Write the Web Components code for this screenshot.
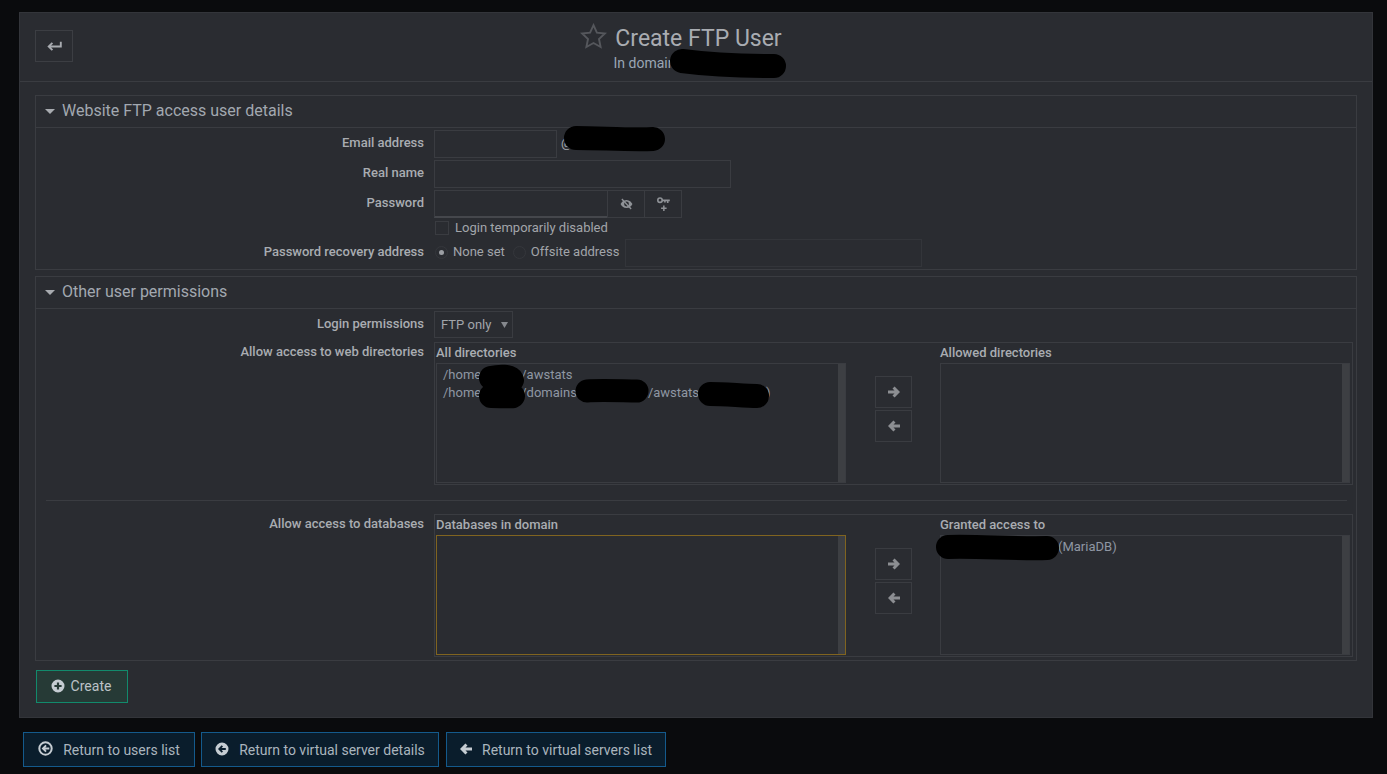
<!DOCTYPE html>
<html lang="en"><head><meta charset="utf-8"><title>Create FTP User</title>
<style>
html,body{margin:0;height:774px;overflow:hidden;background:#0a0b0d;font-family:Roboto,"Liberation Sans",sans-serif;color:#a6a9ae;font-size:13px}
body{position:relative}
.sp{display:inline-block}
</style></head><body>
<wm-page>
  <wm-panel>
    <wm-header slot="header" title-text="Create FTP User" sub="In domain"></wm-header>
    <wm-section heading="Website FTP access user details" style="margin-top:13px;height:175px">
      <wm-row label="Email address"><wm-input w="123"></wm-input><span style="margin:5px 0 0 4px;font-size:13px">@</span></wm-row>
      <wm-row label="Real name"><wm-input w="297"></wm-input></wm-row>
      <wm-row label="Password"><wm-pass></wm-pass></wm-row>
      <wm-row style="margin-top:1px;height:14px"><wm-check label="Login temporarily disabled"></wm-check></wm-row>
      <wm-row label="Password recovery address" style="margin-top:2px"><wm-radios></wm-radios></wm-row>
    </wm-section>
    <wm-section heading="Other user permissions" style="margin-top:6px;height:385px">
      <wm-row label="Login permissions"><wm-select>FTP only</wm-select></wm-row>
      <wm-row label="Allow access to web directories" style="margin-top:2px" top>
        <wm-multi left="All directories" right="Allowed directories">
          <div slot="l">/home<span class="sp" style="width:40px"></span>/awstats</div>
          <div slot="l">/home<span class="sp" style="width:40px"></span>/domains<span class="sp" style="width:71px"></span>/awstats<span class="sp" style="width:67px"></span>)</div>
        </wm-multi>
      </wm-row>
      <wm-rule></wm-rule>
      <wm-row label="Allow access to databases" top>
        <wm-multi left="Databases in domain" right="Granted access to" amber>
          <div slot="r"><span class="sp" style="width:111px"></span>(MariaDB)</div>
        </wm-multi>
      </wm-row>
    </wm-section>
    <wm-btn kind="create" icon="plus" style="margin:9px 0 0 16px" w="92">Create</wm-btn>
  </wm-panel>
  <wm-footer>
    <wm-btn kind="ret" icon="circle-o-left" w="172">Return to users list</wm-btn>
    <wm-btn kind="ret" icon="circle-left" w="238">Return to virtual server details</wm-btn>
    <wm-btn kind="ret" icon="left" w="220" style="margin-left:1px">Return to virtual servers list</wm-btn>
  </wm-footer>
</wm-page>
<wm-redactions></wm-redactions>
<script>
const ICONS={
 plus:'<svg width="14" height="14" viewBox="0 0 14 14"><path fill-rule="evenodd" fill="currentColor" d="M7 .5a6.500 6.500 0 1 0 0 13 6.500 6.500 0 0 0 0-13zM5.900 3.400h2.200v2.500h2.500v2.200H8.100v2.500H5.900V8.100H3.400V5.900h2.500z"/></svg>',
 'circle-o-left':'<svg width="15" height="15" viewBox="0 0 15 15"><circle cx="7.500" cy="7.500" r="6.200" fill="none" stroke="currentColor" stroke-width="2"/><path fill="currentColor" d="M3.600 7.500 7.400 3.800l1.300 1.300-1.400 1.300h4v2.200h-4l1.400 1.300-1.300 1.300z"/></svg>',
 'circle-left':'<svg width="14" height="14" viewBox="0 0 14 14"><path fill-rule="evenodd" fill="currentColor" d="M7 .5a6.500 6.500 0 1 0 0 13 6.500 6.500 0 0 0 0-13zM3 7l3.700-3.700L8 4.600 6.600 6h4.200v2H6.600L8 9.400l-1.300 1.300z"/></svg>',
 left:'<svg width="12" height="12" viewBox="0 0 12 12"><path fill="currentColor" d="M0 6 5.400.4 7.500 2.500l-2 1.900H12v3.200H5.500l2 1.900-2.100 2.100z"/></svg>',
 right:'<svg width="12" height="12" viewBox="0 0 12 12"><path fill="currentColor" d="M12 6 6.600.4 4.500 2.500l2 1.900H0v3.200h6.500l-2 1.900 2.100 2.100z"/></svg>'
};
function def(name,css,render){
  customElements.define(name,class extends HTMLElement{
    connectedCallback(){
      if(this.shadowRoot)return;
      const s=this.attachShadow({mode:'open'});
      s.innerHTML='<style>'+css+'</style>'+render(this);
    }
  });
}
const A=(e,n,d='')=>e.getAttribute(n)??d;
const SLOT=()=>'<slot></slot>';
def('wm-page',':host{display:block;padding:12px 14px 0 19px}',SLOT);
def('wm-panel',':host{display:block;box-sizing:border-box;width:1354px;height:706px;background:#2a2c31;border:1px solid #33353a}',
 ()=>'<slot name="header"></slot><slot></slot>');
def('wm-header',`:host{display:flex;position:relative;box-sizing:border-box;height:69px;border-bottom:1px solid #3a3c41}
 .back{box-sizing:border-box;width:38px;height:32px;margin:17px 0 0 15px;border:1px solid #3c3e43;display:flex;align-items:center;justify-content:center;color:#a8abb0;flex:none}
 .c{position:absolute;left:0;right:0;top:0;text-align:center}
 .t{display:flex;justify-content:center;align-items:center;gap:7px;margin:9px 0 0 -30px;height:32px;font-size:23px;color:#a9acb2;line-height:32px}
 .t svg{margin:0 1px 4px 0}
 .t span{padding-top:1px}
 .s{font-size:14px;color:#9aa6b4;line-height:18px;margin:0 0 0 -103px}`,
 e=>`<div class="back"><svg width="15" height="11" viewBox="0 0 15 11"><path d="M13.800 .8v4.700H2M5.400 1.800 1.700 5.500 5.400 9.200" fill="none" stroke="currentColor" stroke-width="1.900"/></svg></div>
 <div class="c"><div class="t"><svg width="27" height="27" viewBox="0 0 27 27"><path d="M13.500 2.200l3.400 7.400 8 .9-5.900 5.500 1.600 8-7.100-4-7.100 4 1.600-8-5.900-5.500 8-.9z" fill="none" stroke="#55575c" stroke-width="1.900"/></svg><span>${A(e,'title-text')}</span></div><div class="s">${A(e,'sub')}</div></div>`);
def('wm-section',`:host{display:block;box-sizing:border-box;width:1322px;margin-left:15px;border:1px solid #3a3c41}
 .h{box-sizing:border-box;height:32px;border-bottom:1px solid #3a3c41;display:flex;align-items:center;padding:0 0 2px 9px;gap:7px;font-size:16px;color:#a2a8b0}
 .b{padding-top:2px;display:flex;flex-direction:column;gap:2px}`,
 e=>`<div class="h"><svg width="10" height="5" viewBox="0 0 10 5" style="margin-top:2px"><path d="M0 0h10L5 5z" fill="#a8abb0"/></svg><span>${A(e,'heading')}</span></div><div class="b"><slot></slot></div>`);
def('wm-row',`:host{display:grid;grid-template-columns:398px 1fr;min-height:14px}
 .l{box-sizing:border-box;padding:5px 10px 0 0;text-align:right;font-weight:500;font-size:13px;line-height:16px;color:#a9acb1}
 :host([top]) .l{padding-top:2px}
 .f{display:flex;align-items:flex-start}`,
 e=>`<div class="l">${A(e,'label')}</div><div class="f"><slot></slot></div>`);
def('wm-input',`:host{display:block;box-sizing:border-box;height:28px;border:1px solid #3a3c41}`,e=>{e.style.width=A(e,'w')+'px';return ''});
def('wm-pass',`:host{display:flex;height:28px}
 .i{box-sizing:border-box;width:173px;height:28px;border:1px solid #3a3c41;border-right:0;border-bottom:2px solid #45474c}
 .b{box-sizing:border-box;height:28px;border:1px solid #3a3c41;display:flex;align-items:center;justify-content:center;color:#8f9297}`,
 ()=>`<div class="i"></div><div class="b" style="width:38px"><svg width="13" height="12" viewBox="0 0 14 12"><path fill-rule="evenodd" fill="currentColor" d="M7 1.600C3.800 1.600 1.600 4 .6 6c1 2 3.200 4.400 6.400 4.400S12.400 8 13.400 6C12.400 4 10.200 1.600 7 1.600zM7 3.400a2.600 2.600 0 1 1 0 5.200 2.600 2.600 0 0 1 0-5.200z"/><path d="M2 .6 12 11.400" stroke="currentColor" stroke-width="1.400"/></svg></div><div class="b" style="width:38px;margin-left:-1px"><svg width="13" height="15" viewBox="0 0 13 15"><circle cx="3" cy="3.200" r="2.200" fill="none" stroke="currentColor" stroke-width="1.600"/><path fill="currentColor" d="M5 2.400h7.800v1.800h-1.300v1.700H9.900V4.200H8.700v1.200H7.100V4.200H5z"/><path fill="currentColor" d="M6.100 8.500h1.500v2h2v1.400h-2v2H6.100v-2h-2v-1.400h2z"/></svg></div>`);
def('wm-check',`:host{display:flex;align-items:center;font-size:13px;color:#a2a5aa;line-height:14px}
 i{display:block;box-sizing:border-box;width:14px;height:14px;border:1px solid #3a3c41;margin:0 6px 0 1px}`,
 e=>`<i></i><span>${A(e,'label')}</span>`);
def('wm-radios',`:host{display:flex;align-items:center;height:28px;font-size:13px;color:#a2a5aa}
 .r{box-sizing:border-box;width:13px;height:13px;border-radius:50%;border:1px solid #35373c;display:flex;align-items:center;justify-content:center;flex:none;margin-bottom:2px}
 .r b{display:block;width:5px;height:5px;border-radius:50%;background:#9b9ea3}
 span{margin:0 0 4px 5px}
 .o{box-sizing:border-box;width:297px;height:28px;border:1px solid #33353a;margin-left:6px}`,
 ()=>`<div class="r" style="margin-left:1px"><b></b></div><span>None set</span><div class="r" style="margin-left:8px"></div><span>Offsite address</span><div class="o"></div>`);
def('wm-select',`:host{display:flex;align-items:center;box-sizing:border-box;width:79px;height:27px;border:1px solid #3a3c41;padding-left:6px;font-size:13px;color:#a2a5aa;gap:10px}`,
 ()=>`<slot></slot><svg width="7" height="6" viewBox="0 0 7 6"><path d="M0 0h7L3.500 6z" fill="#85888d"/></svg>`);
def('wm-listbox',`:host{display:block;box-sizing:border-box;position:relative;width:410px;height:120px;border:1px solid #3a3c41;padding:2px 6px;font-size:13px;line-height:18px;color:#8f97a3}
 :host([amber]){border-color:#806420}
 .sb{position:absolute;right:0;top:0;bottom:0;width:7px;background:#3d3f43}`,
 ()=>`<slot></slot><div class="sb"></div>`);
def('wm-arrow',`:host{display:flex;box-sizing:border-box;width:37px;height:32px;border:1px solid #3a3c41;align-items:center;justify-content:center;color:#8c8e92}`,
 e=>ICONS[A(e,'dir')]);
def('wm-multi',`:host{display:block;box-sizing:border-box;width:919px;height:143px;border:1px solid #3a3c41;padding-left:1px}
 .hd{display:flex;height:20px;font-weight:500;font-size:13px;line-height:19px;color:#a9acb1}
 .hd span:first-child{width:504px}
 .m{display:flex}
 .a{width:94px;box-sizing:border-box;padding:13px 0 0 29px;display:flex;flex-direction:column;gap:2px}`,
 e=>`<div class="hd"><span>${A(e,'left')}</span><span>${A(e,'right')}</span></div><div class="m"><wm-listbox ${e.hasAttribute('amber')?'amber':''}><slot name="l"></slot></wm-listbox><div class="a"><wm-arrow dir="right"></wm-arrow><wm-arrow dir="left"></wm-arrow></div><wm-listbox><slot name="r"></slot></wm-listbox></div>`);
def('wm-rule',`:host{display:block;height:1px;margin:13px 9px 11px 10px;background:#3a3c41}`,()=>'');
def('wm-btn',`:host{display:inline-flex;box-sizing:border-box;align-items:center;justify-content:center;gap:6px;height:33px;font-size:14px;border:1px solid;padding:0 2px 1px 0}
 :host([kind=create]){background:#263a36;border-color:#128a6c;color:#bcc2c6}
 :host([kind=ret]){background:#0a1d2c;border-color:#145a8c;color:#aab5be;height:35px;gap:10px;padding:0}
 svg{display:block}
 .i{display:flex;position:relative;color:#c5ccd2}
 :host([kind=ret]) .i{top:-1px}`,
 e=>{e.style.width=A(e,'w')+'px';return `<span class="i">${ICONS[A(e,'icon')]}</span><slot></slot>`});
def('wm-footer',`:host{display:flex;gap:6px;margin:14px 0 0 4px}`,SLOT);
def('wm-redactions',`:host{display:block;position:absolute;left:0;top:0;width:1387px;height:774px;pointer-events:none}
 svg{display:block}`,()=>`<svg width="1387" height="774" viewBox="0 0 1387 774"><g fill="none" stroke="#000" stroke-linecap="round" stroke-linejoin="round">
 <path d="M682 61C705 64 745 66 774 66" stroke-width="24"/>
 <path d="M576 138C600 138 630 140 653 139" stroke-width="24"/>
 <path d="M491 378C500 376 510 376 512 380" stroke-width="24"/><path d="M491 396C500 396 510 397 513 396" stroke-width="24"/>
 <path d="M587 391C600 390 625 391 637 391" stroke-width="23"/>
 <path d="M710 394C725 394 745 396 757 396" stroke-width="24"/>
 <path d="M948 547C975 546 1020 549 1047 548" stroke-width="24"/></g></svg>`);
</script>
</body></html>
